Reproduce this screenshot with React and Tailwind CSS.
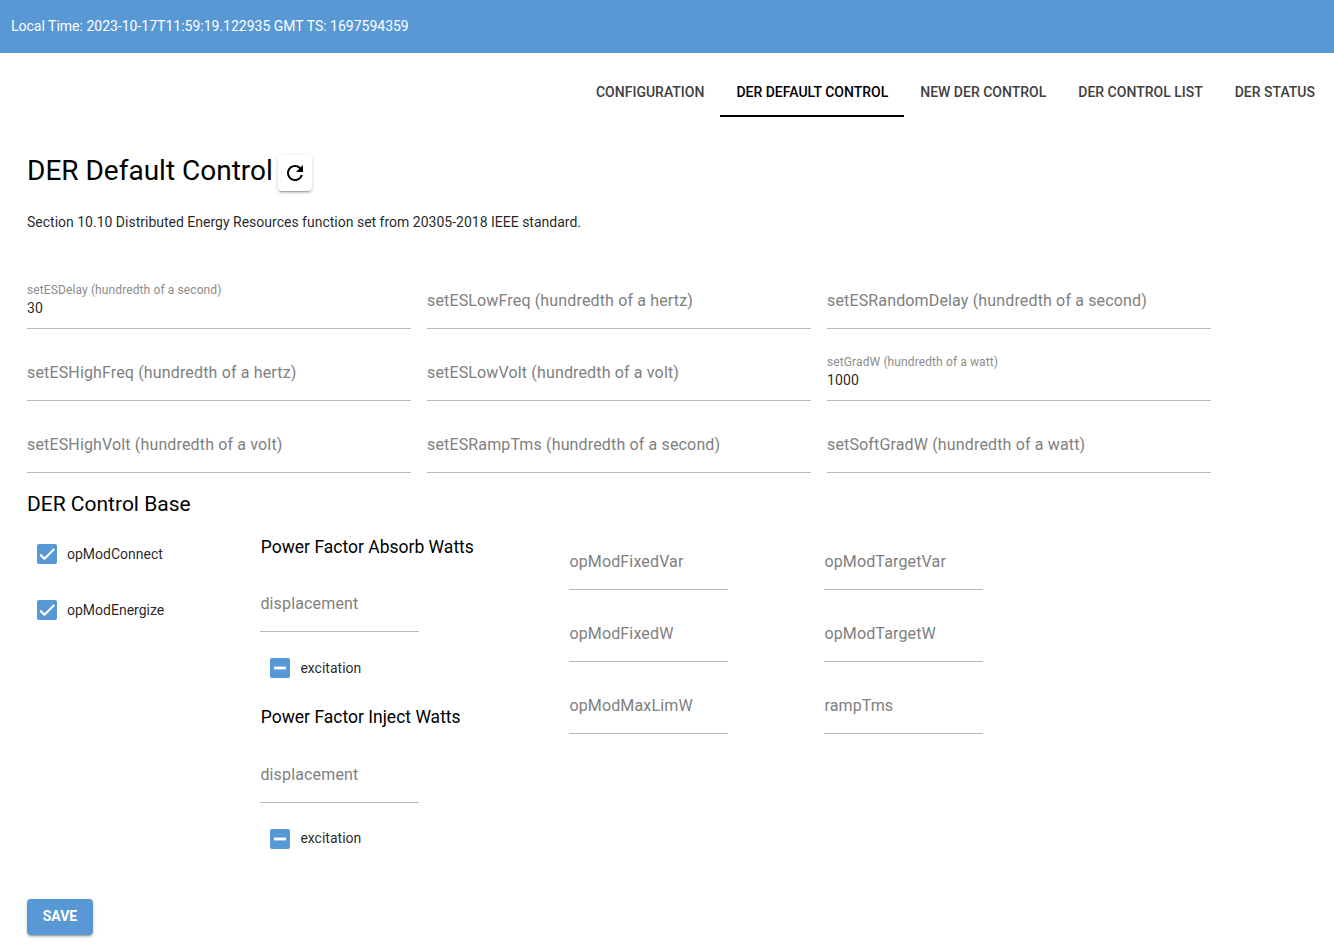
import React from "react";

const TABS = ["Configuration", "DER Default Control", "New DER Control", "DER Control List", "DER Status"];

const FIELDS = [
  { label: "setESDelay (hundredth of a second)", value: "30" },
  { label: "setESLowFreq (hundredth of a hertz)" },
  { label: "setESRandomDelay (hundredth of a second)" },
  { label: "setESHighFreq (hundredth of a hertz)" },
  { label: "setESLowVolt (hundredth of a volt)" },
  { label: "setGradW (hundredth of a watt)", value: "1000" },
  { label: "setESHighVolt (hundredth of a volt)" },
  { label: "setESRampTms (hundredth of a second)" },
  { label: "setSoftGradW (hundredth of a watt)" },
];

function Field({ label, value }) {
  return (
    <label className="flex h-14 w-full flex-col border-b border-[#b9b9b9]">
      {value ? (
        <>
          <span className="mt-2.5 text-[12px] leading-[14px] tracking-[0.11px] text-[#8c8c8c]">{label}</span>
          <span className="mt-px text-[14px] leading-5 tracking-[0.13px] text-black/87">{value}</span>
        </>
      ) : (
        <span className="mt-4 text-[16px] leading-6 tracking-[0.15px] text-[#808080]">{label}</span>
      )}
    </label>
  );
}

function Checkbox({ label, mixed, labelClass = "" }) {
  return (
    <div className="flex h-10 items-center pl-2.5">
      <span className="flex size-5 items-center justify-center rounded-[2px] bg-[#5898d4]">
        {mixed ? (
          <svg viewBox="0 0 20 20" className="size-5">
            <path d="M4 8.6h12v2.8H4z" fill="#fff" />
          </svg>
        ) : (
          <svg viewBox="0 0 24 24" className="size-4" fill="none" stroke="#fff" strokeWidth="3.12">
            <path d="M1.73,12.91 8.1,19.28 22.79,4.59" />
          </svg>
        )}
      </span>
      <span className={`ml-2.5 text-[14px] leading-5 text-black/87 ${labelClass}`}>{label}</span>
    </div>
  );
}

function PowerFactor({ title, fieldClass, labelClass }) {
  return (
    <section>
      <h3 className="pl-[0.4px] text-[17.5px] leading-7">{title}</h3>
      <div className={`w-[159px] ${fieldClass}`}>
        <Field label="displacement" />
      </div>
      <div className="mt-4">
        <Checkbox label="excitation" mixed labelClass={labelClass} />
      </div>
    </section>
  );
}

export default function App() {
  return (
    <div className="min-h-[952px] w-full bg-white font-[Roboto,sans-serif] text-black">
      <header className="flex h-[53px] items-center bg-[#5898d4] px-[11px] text-[14px] text-white">
        Local Time: 2023-10-17T11:59:19.122935 GMT TS: 1697594359
      </header>

      <nav className="mt-4 flex h-12 justify-end pr-[3px]">
        {TABS.map((tab, i) => (
          <button
            key={tab}
            className={
              i === 1
                ? "border-b-2 border-black px-4 text-[14px] font-medium uppercase text-black"
                : "border-b-2 border-transparent px-4 text-[14px] font-medium uppercase text-[#404040]"
            }
          >
            {tab}
          </button>
        ))}
      </nav>

      <main className="px-[27px]">
        <div className="flex h-[74px] items-end">
          <h1 className="mb-0.5 text-[28px] leading-9">DER Default Control</h1>
          <button className="ml-[5px] flex h-9 w-[34px] items-center justify-center rounded bg-white shadow-[0_3px_1px_-2px_rgba(0,0,0,0.2),0_2px_2px_0_rgba(0,0,0,0.14),0_1px_5px_0_rgba(0,0,0,0.12)]">
            <svg viewBox="0 0 24 24" className="size-6" fill="currentColor">
              <path d="M17.65 6.35A7.958 7.958 0 0 0 12 4c-4.42 0-7.99 3.58-7.99 8s3.57 8 7.99 8c3.73 0 6.84-2.55 7.73-6h-2.08A5.99 5.99 0 0 1 12 18c-3.31 0-6-2.69-6-6s2.69-6 6-6c1.66 0 3.14.69 4.22 1.78L13 11h7V4l-2.35 2.35z" />
            </svg>
          </button>
        </div>
        <p className="mt-[21px] text-[14px] leading-5 text-black/87">
          Section 10.10 Distributed Energy Resources function set from 20305-2018 IEEE standard.
        </p>

        <div className="mt-[41px] grid w-[1184px] grid-cols-3 gap-4">
          {FIELDS.map((f) => (
            <Field key={f.label} {...f} />
          ))}
        </div>

        <h2 className="mt-[15px] text-[21px] leading-8">DER Control Base</h2>
        <div className="mt-[13px] flex">
          <div className="flex w-[233.4px] flex-col gap-4 pt-px">
            <Checkbox label="opModConnect" />
            <Checkbox label="opModEnergize" />
          </div>
          <div className="flex w-[309px] flex-col gap-[15px]">
            <PowerFactor title="Power Factor Absorb Watts" fieldClass="mt-[15px]" labelClass="" />
            <PowerFactor title="Power Factor Inject Watts" fieldClass="mt-4" labelClass="pb-0.5" />
          </div>
          <div className="flex w-[255px] flex-col gap-4 pr-24 pt-px">
            <Field label="opModFixedVar" />
            <Field label="opModFixedW" />
            <Field label="opModMaxLimW" />
          </div>
          <div className="flex w-[159px] flex-col gap-4 pt-px">
            <Field label="opModTargetVar" />
            <Field label="opModTargetW" />
            <Field label="rampTms" />
          </div>
        </div>

        <button className="mt-10 flex h-9 w-[66px] items-center justify-center rounded bg-[#5898d4] pb-0.5 text-[14px] font-bold text-white shadow-[0_3px_1px_-2px_rgba(0,0,0,0.2),0_2px_2px_0_rgba(0,0,0,0.14),0_1px_5px_0_rgba(0,0,0,0.12)]">
          SAVE
        </button>
      </main>
    </div>
  );
}
